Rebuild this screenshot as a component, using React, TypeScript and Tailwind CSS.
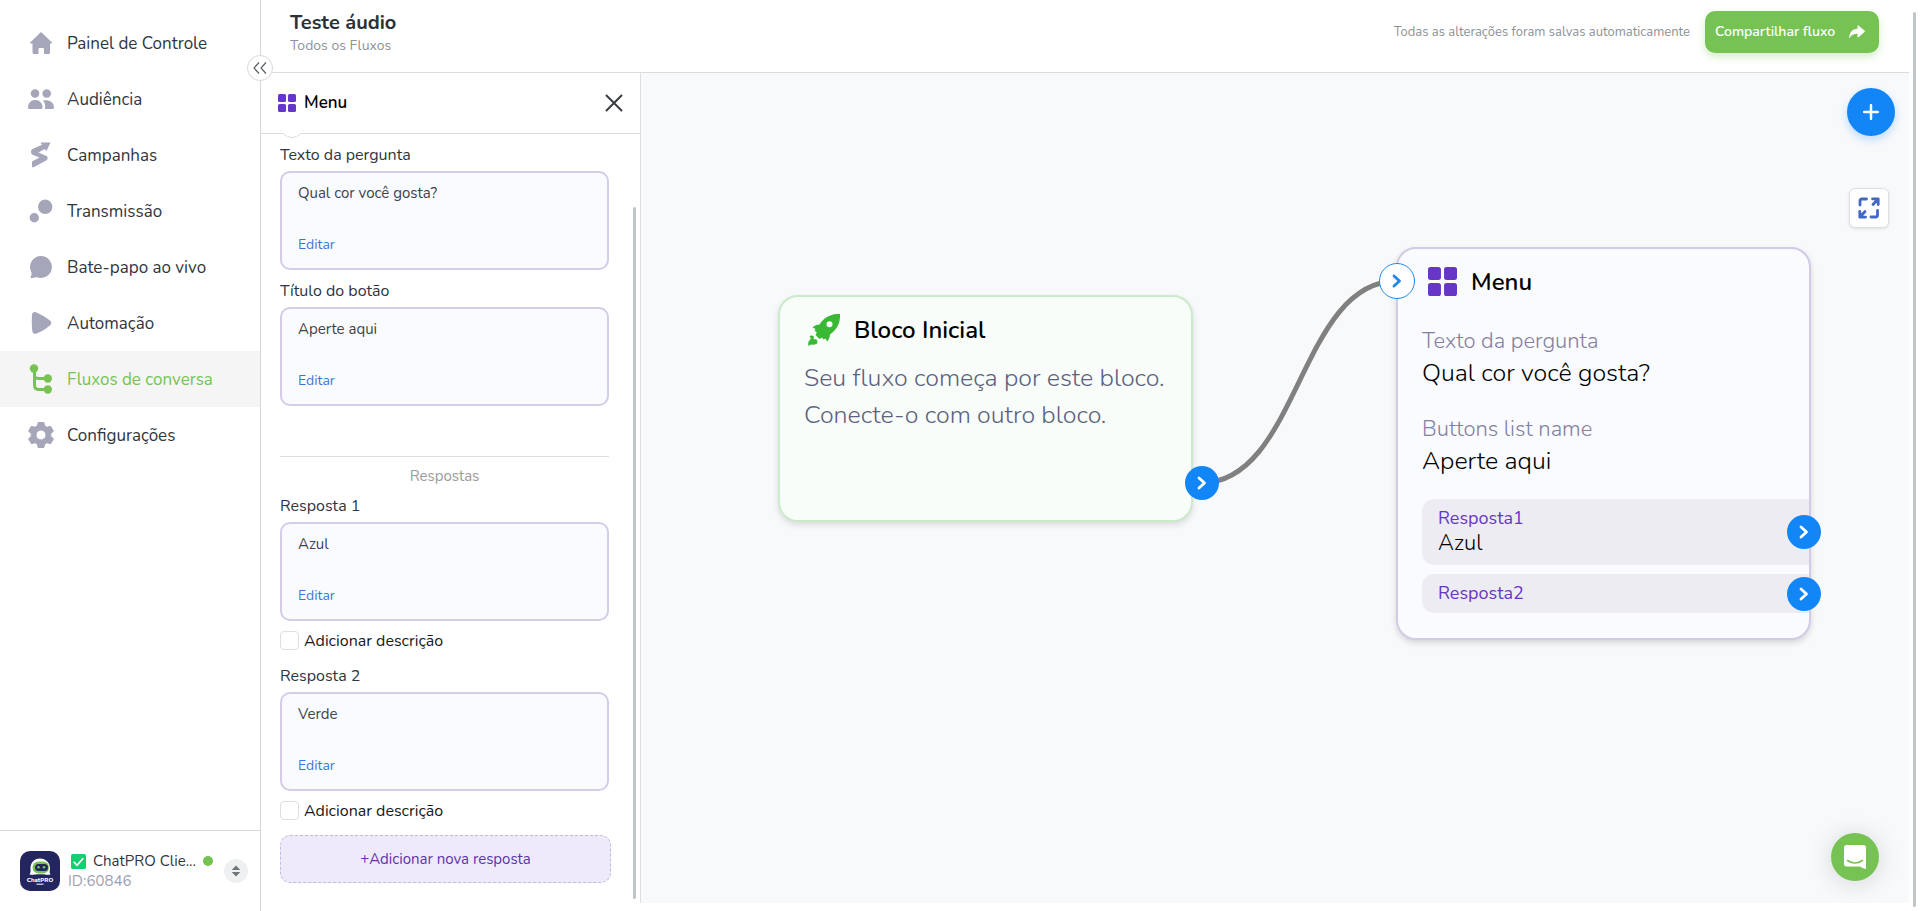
import type { ReactNode } from "react";

type NavItem = { label: string; icon: ReactNode; active?: boolean };

const navItems: NavItem[] = [
  {
    label: "Painel de Controle",
    icon: <path d="M13 2 L24 12.5 Q24.500 13.500 23.500 13.500 H22 V22.500 Q22 24 20.500 24 H16 V19 Q16 18 15 18 H11.500 Q10.500 18 10.500 19 V24 H6 Q4.500 24 4.500 22.500 V13.500 H2.500 Q1.500 13.500 2.200 12.500 Z" />,
  },
  {
    label: "Audiência",
    icon: (
      <>
        <circle cx="7" cy="7.500" r="4.300" />
        <circle cx="18.700" cy="7.500" r="4.300" />
        <path d="M0 21.500 C0 11.500 14.500 11.500 14.500 21.500 Q14.500 23 13 23 H1.500 Q0 23 0 21.500 Z" />
        <path d="M15 14.600 C20 13.500 26 15.500 26 21.500 Q26 23 24.500 23 H17 C17.500 19.500 17 17 15 14.600 Z" />
      </>
    ),
  },
  {
    label: "Campanhas",
    icon: <path d="M12.500 0.500 H22.500 L18.500 9 L16.500 7 L10.500 10.500 L18.500 14 Q20.500 15.500 19 18 L5.500 25.300 Q4 25.800 4 24 V19.500 L11.500 15.500 L4 12.500 Q2 10 4 7.300 L14 2.800 Z" />,
  },
  {
    label: "Transmissão",
    icon: (
      <>
        <circle cx="17.200" cy="8.800" r="7.200" />
        <circle cx="6.300" cy="19.800" r="4.700" />
      </>
    ),
  },
  {
    label: "Bate-papo ao vivo",
    icon: <path d="M13 2 A11 11 0 1 1 8.300 23 Q6 24.300 3 24 Q2 23.700 2.700 22.700 Q4 21 3.500 18.500 A11 11 0 0 1 13 2 Z" />,
  },
  {
    label: "Automação",
    icon: <path d="M4 5 C4 2.500 6 1.500 8.500 2.500 C14 5 19 8 22.500 11 Q24.300 13 22.500 15 C19 18 14 21.500 8.500 23.500 C6 24.500 4.500 23 4.300 21 C3.700 15.500 3.700 10 4 5 Z" />,
  },
  {
    label: "Fluxos de conversa",
    active: true,
    icon: (
      <>
        <path d="M6.500 2 V19 Q6.500 23.500 11 23.500 H19 M6.500 10 Q7 12.500 11 12.500 H19" fill="none" stroke="currentColor" strokeWidth="3" />
        <circle cx="6" cy="2.500" r="4.200" />
        <circle cx="19.800" cy="12.500" r="4.200" />
        <circle cx="19.800" cy="23.500" r="4.200" />
      </>
    ),
  },
  {
    label: "Configurações",
    icon: (
      <path
        fillRule="evenodd"
        strokeWidth="1"
        strokeLinejoin="round"
        stroke="currentColor"
        d="M10.200 0.500 H15.800 L16.700 4 L19 5.300 L22.600 4.300 L25.400 9.100 L22.800 11.700 V14.300 L25.400 16.900 L22.600 21.700 L19 20.700 L16.700 22 L15.800 25.500 H10.200 L9.300 22 L7 20.700 L3.400 21.700 L0.600 16.900 L3.200 14.300 V11.700 L0.600 9.100 L3.400 4.300 L7 5.300 L9.300 4 Z M13 8 A5 5 0 1 0 13 18 A5 5 0 1 0 13 8 Z"
      />
    ),
  },
];

function GridIcon({ className }: { className: string }) {
  return (
    <svg viewBox="0 0 28 28" className={className} fill="#6636c7" aria-hidden="true">
      <rect width="12.500" height="12.500" rx="2.500" />
      <rect x="15.500" width="12.500" height="12.500" rx="2.500" />
      <rect y="15.500" width="12.500" height="12.500" rx="2.500" />
      <rect x="15.500" y="15.500" width="12.500" height="12.500" rx="2.500" />
    </svg>
  );
}

function RocketIcon() {
  return (
    <svg viewBox="0 0 32 32" className="size-8" fill="#3bb836" aria-hidden="true">
      <path
        fillRule="evenodd"
        d="M32 0 C32.500 9 29 15.500 22 20.500 C22 23 21 25.500 19 27.500 L17.500 24.500 L15.500 25.500 L14 23.500 L11.500 25 L7.500 21 L8.800 18.500 L6.500 16.500 L7.500 15 L4.500 13.500 C6.500 11.500 9 10.500 11.500 10.500 C16 3.500 23 -0.500 32 0 Z M21.500 7.200 A3 3 0 1 0 21.500 13.200 A3 3 0 1 0 21.500 7.200 Z"
      />
      <path d="M1.500 22 Q4 21 6 22.500 L5.500 25 L8.500 25.500 Q10.500 28 8.500 30 Q6 31 3 30.500 L0.500 32 Q-0.500 28 1.500 26.500 L2.800 24.500 Z" />
    </svg>
  );
}

function Chevron() {
  return (
    <svg viewBox="0 0 16 16" className="size-4" fill="none" stroke="currentColor" strokeWidth="2.800" strokeLinecap="round" strokeLinejoin="round" aria-hidden="true">
      <path d="M5 3 L10.500 8 L5 13" />
    </svg>
  );
}

function Sidebar() {
  return (
    <aside className="flex w-[261px] shrink-0 flex-col border-r border-[#d5d9db] bg-white">
      <nav className="flex-1 pt-[15px]">
        {navItems.map((item) => (
          <a
            key={item.label}
            href="#"
            className={`flex h-14 items-center gap-[13px] pl-7 text-[17px] ${item.active ? "bg-[#f5f5f5] text-[#76c353]" : "text-[#2f3640]"}`}
          >
            <svg viewBox="0 0 26 26" className={`size-[26px] overflow-visible ${item.active ? "text-[#76c353]" : "text-[#a5a6b9]"}`} fill="currentColor" aria-hidden="true">
              {item.icon}
            </svg>
            <span className="pt-0.5">{item.label}</span>
          </a>
        ))}
      </nav>

      <div className="flex h-[81px] items-center border-t border-[#d5d9db] pl-5 pr-3">
        <svg viewBox="0 0 40 40" className="size-10 shrink-0" role="img" aria-label="ChatPRO">
          <rect width="40" height="40" rx="10" fill="#23255f" />
          <path d="M20 7.500 C26 7.500 30 12 30 17 C30 20 29 21.500 30.500 23.500 C27 24 25 23.500 23 23.200 H17 C15 23.500 13 24 9.500 23.500 C11 21.500 10.500 20 10.500 17 C10.500 12 14 7.500 20 7.500 Z" fill="#fff" />
          <rect x="12.500" y="10.500" width="16.500" height="12" rx="6" fill="#76c353" />
          <rect x="15" y="13" width="13" height="7" rx="3.500" fill="#23255f" />
          <circle cx="18.500" cy="16.300" r="1.300" fill="#76c353" />
          <circle cx="24" cy="16.300" r="1.300" fill="#76c353" />
          <text x="20" y="30.500" textAnchor="middle" fontSize="6" fontWeight="800" fill="#fff">ChatPRO</text>
          <rect x="16.500" y="32.500" width="7" height="1.500" fill="#b9badb" />
        </svg>
        <div className="ml-2 min-w-0 flex-1 text-[15px] leading-5">
          <div className="flex items-center gap-[7px] pl-[3px] text-[#2f3640]">
            <svg viewBox="0 0 16 16" className="size-[15px] shrink-0" aria-hidden="true">
              <rect width="16" height="16" rx="2" fill="#14cf72" />
              <path d="M3 8.500 L6.500 12 L13 4.500" fill="none" stroke="#fff" strokeWidth="1.800" />
            </svg>
            <span className="whitespace-nowrap">ChatPRO Clie...</span>
            <span className="size-[10px] shrink-0 rounded-full bg-[#76c353]" />
          </div>
          <div className="text-[#9fa1b4]">ID:60846</div>
        </div>
        <button type="button" aria-label="Trocar conta" className="flex size-6 shrink-0 items-center justify-center rounded-full bg-[#eef0f1]">
          <svg viewBox="0 0 10 12" className="h-3 w-[10px]" fill="#70777b" aria-hidden="true">
            <path d="M5 0.500 L9.300 5 H0.700 Z M5 11.500 L9.300 7 H0.700 Z" />
          </svg>
        </button>
      </div>
    </aside>
  );
}

function Field({ id, label, value }: { id: string; label: string; value: string }) {
  return (
    <div>
      <label htmlFor={id} className="mb-1 block text-base leading-6 text-[#2f3640]">{label}</label>
      <div className="flex flex-col items-start rounded-[10px] border-2 border-[#d3cdea] bg-[#fafbff] px-4 pt-[10px] pb-3">
        <textarea id={id} defaultValue={value} className="block h-[51px] w-full resize-none overflow-hidden bg-transparent text-[15px] leading-5 text-[#3f434a] outline-none" />
        <button type="button" className="text-sm leading-[22px] text-[#3a78d8]">Editar</button>
      </div>
    </div>
  );
}

function DescriptionCheck({ id }: { id: string }) {
  return (
    <div className="mt-[10px] flex h-[19px] items-center gap-[5px]">
      <input id={id} type="checkbox" className="size-[19px] appearance-none rounded border border-[#dcdfe1] bg-white checked:bg-[#6636c7]" />
      <label htmlFor={id} className="text-base leading-5 text-[#17191c]">Adicionar descrição</label>
    </div>
  );
}

function EditorPanel() {
  return (
    <section className="flex w-[380px] shrink-0 flex-col border-r border-[#dcdfe1] bg-white">
      <div className="flex h-[61px] shrink-0 items-center border-b border-[#d9dcde] pl-[17px] pr-[17px]">
        <GridIcon className="size-[18px]" />
        <h2 className="ml-2 flex-1 text-[17px] font-semibold text-black">Menu</h2>
        <button type="button" aria-label="Fechar">
          <svg viewBox="0 0 18 18" className="size-[18px]" stroke="#3a3d41" strokeWidth="2" strokeLinecap="round" aria-hidden="true">
            <path d="M1.500 1.500 L16.500 16.500 M16.500 1.500 L1.500 16.500" />
          </svg>
        </button>
      </div>

      {/* the scroll area overlaps the title's border by one pixel */}
      <div className="-mt-px flex min-h-0 flex-1">
        <div className="min-w-0 flex-1 overflow-hidden pl-[19px] pr-[22px]">
          {/* tail of the avatar that is scrolled away under the title */}
          <div className="-mt-[19px] size-6 rounded-full border border-[#d9dcde] bg-white" />
          <div className="mt-[5px] flex flex-col gap-[9px] pr-0.5">
            <Field id="question" label="Texto da pergunta" value="Qual cor você gosta?" />
            <Field id="button-title" label="Título do botão" value="Aperte aqui" />
          </div>
          <h3 className="mt-[50px] mr-0.5 mb-2 border-t border-[#dcdfe1] pt-[9px] text-center text-[15px] leading-5 text-[#999ca0]">Respostas</h3>
          <div className="flex flex-col gap-[14px] pr-0.5">
            <div>
              <Field id="answer-1" label="Resposta 1" value="Azul" />
              <DescriptionCheck id="description-1" />
            </div>
            <div>
              <Field id="answer-2" label="Resposta 2" value="Verde" />
              <DescriptionCheck id="description-2" />
            </div>
          </div>
          <button type="button" className="mt-[15px] h-12 w-full rounded-[10px] border border-dashed border-[#c3b8de] bg-[#efeaf9] text-[15px] text-[#5a35b0]">
            +Adicionar nova resposta
          </button>
        </div>
        <div className="flex w-[7px] pt-[74px] pb-1">
          <div className="w-[3px] rounded-full bg-[#bfc5c9]" />
        </div>
      </div>
    </section>
  );
}

function Answer({ label, value }: { label: string; value?: string }) {
  return (
    <div className="relative rounded-l-[12px] bg-[#eeecf3] pt-[7px] pb-2 pl-4">
      <p className="text-lg leading-6 text-[#6636c7]">{label}</p>
      {value ? <p className="text-[22px] leading-[27px] font-light text-black">{value}</p> : null}
      <button type="button" aria-label={`Conectar ${label}`} className="absolute top-1/2 -right-3 flex size-[34px] -translate-y-1/2 items-center justify-center rounded-full bg-[#1286f7] text-white">
        <Chevron />
      </button>
    </div>
  );
}

function Canvas() {
  return (
    <section className="relative min-w-0 flex-1 overflow-hidden bg-[#f8f9fb]">
      <svg className="absolute inset-0 size-full" aria-hidden="true">
        <path d="M560 410 C658 410 658 208 756 208" fill="none" stroke="#808080" strokeWidth="5" />
      </svg>

      <article className="absolute top-[222px] left-[137px] h-[227px] w-[415px] rounded-[20px] border-2 border-[#cbeaca] bg-[#f9fdfa] pt-[17px] pl-6 shadow-[0_3px_6px_rgba(0,0,0,0.12)]">
        <div className="flex h-8 items-center gap-[14px] pl-1">
          <RocketIcon />
          <h2 className="text-2xl font-semibold text-black">Bloco Inicial</h2>
        </div>
        <p className="mt-[14px] text-[25px] leading-[37px] font-light text-[#5d6280]">
          Seu fluxo começa por este bloco.
          <br />
          Conecte-o com outro bloco.
        </p>
        <button type="button" aria-label="Próximo bloco" className="absolute top-[169px] -right-7 flex size-[34px] items-center justify-center rounded-full bg-[#1286f7] text-white">
          <Chevron />
        </button>
      </article>

      <article className="absolute top-[174px] left-[755px] w-[415px] rounded-[20px] border-2 border-[#d1cbe8] bg-[#fafbff] pt-[18px] pb-[25px] pl-6 shadow-[0_3px_6px_rgba(0,0,0,0.14)]">
        <div className="mb-[29px] flex h-[29px] items-center gap-[14px] pl-[6px]">
          <GridIcon className="size-[29px]" />
          <h2 className="text-2xl leading-7 font-semibold text-black">Menu</h2>
        </div>
        <dl className="leading-8 font-light">
          <dt className="text-[22px] text-[#8480a0]">Texto da pergunta</dt>
          <dd className="mb-6 text-[25px] text-black">Qual cor você gosta?</dd>
          <dt className="text-[22px] text-[#8480a0]">Buttons list name</dt>
          <dd className="text-[25px] text-black">Aperte aqui</dd>
        </dl>
        <div className="mt-[22px] flex flex-col gap-[9px]">
          <Answer label="Resposta1" value="Azul" />
          <Answer label="Resposta2" />
        </div>
        <button type="button" aria-label="Entrada do bloco" className="absolute top-[14px] -left-[19px] flex size-9 items-center justify-center rounded-full border border-[#1f87ea] bg-white text-[#1f87ea]">
          <Chevron />
        </button>
      </article>

      <button type="button" aria-label="Adicionar bloco" className="absolute top-[15px] right-[14px] flex size-12 items-center justify-center rounded-full bg-[#1286f7] shadow-[0_4px_8px_rgba(18,134,247,0.25)]">
        <svg viewBox="0 0 16 16" className="size-4" stroke="#fff" strokeWidth="2.500" strokeLinecap="round" aria-hidden="true">
          <path d="M8 1.200 V14.800 M1.200 8 H14.800" />
        </svg>
      </button>
      <button type="button" aria-label="Tela cheia" className="absolute top-[115px] right-5 flex size-10 items-center justify-center rounded-md border border-[#dcdfe3] bg-white shadow-[0_1px_3px_rgba(0,0,0,0.1)]">
        <svg viewBox="0 0 22 22" className="size-[22px]" fill="none" stroke="#4068c4" strokeWidth="2.800" strokeLinecap="round" strokeLinejoin="round" aria-hidden="true">
          <path d="M2 8 V4 Q2 2 4 2 H8.500" />
          <path d="M14.500 1.800 H20.200 V7.500 M20 2 L15 7.500" />
          <path d="M19.500 13.500 V18 Q19.500 20 17.500 20 H13" />
          <path d="M1.800 14.500 V20.200 H7.500 M2 20 L7 14.500" />
        </svg>
      </button>
      <button type="button" aria-label="Abrir chat" className="absolute right-[30px] bottom-[22px] flex size-12 items-center justify-center rounded-full bg-[#76c353] shadow-[0_2px_24px_rgba(0,0,0,0.15)]">
        <svg viewBox="0 0 22 24" className="h-6 w-[22px]" aria-hidden="true">
          <path d="M2.500 0 H19.500 Q22 0 22 2.500 V24 C19.500 23.500 17.500 22.500 16 21.500 H2.500 Q0 21.500 0 19 V2.500 Q0 0 2.500 0 Z" fill="#fff" />
          <path d="M3.500 15.500 Q11 20.500 18.500 15.500" fill="none" stroke="#76c353" strokeWidth="1.600" strokeLinecap="round" />
        </svg>
      </button>
    </section>
  );
}

export default function App() {
  return (
    <div className="flex h-screen overflow-hidden bg-white font-['Nunito','Lato',sans-serif]">
      <Sidebar />

      <main className="relative flex min-w-0 flex-1 flex-col pb-2">
        <header className="flex h-[73px] shrink-0 items-start border-b border-[#d9dcde] pt-[11px] pr-[30px] pl-[29px]">
          <div className="flex-1">
            <h1 className="text-xl leading-6 font-bold text-[#2b3238]">Teste áudio</h1>
            <a href="#" className="block text-sm leading-[22px] text-[#8d9296]">Todos os Fluxos</a>
          </div>
          <p className="mr-[15px] text-[13px] leading-[42px] text-[#8d9296]">Todas as alterações foram salvas automaticamente</p>
          <button type="button" className="flex h-[42px] w-[174px] items-center justify-between rounded-[10px] bg-[#76c353] pr-[14px] pl-[10px] text-sm font-semibold text-white shadow-[0_4px_8px_rgba(118,195,83,0.3)]">
            Compartilhar fluxo
            <svg viewBox="0 0 16 14" className="h-[14px] w-4" fill="currentColor" aria-hidden="true">
              <path d="M0 13.500 C0.500 6.500 4 4 8.500 3.800 V0.800 Q8.700 0 9.500 0.500 L15.700 5.800 Q16.200 6.300 15.700 6.800 L9.500 12.200 Q8.700 12.600 8.500 11.800 V8.800 C5 8.800 2 10 0 13.500 Z" />
            </svg>
          </button>
        </header>

        <div className="flex min-h-0 flex-1">
          <EditorPanel />
          <Canvas />
        </div>

        <button type="button" aria-label="Recolher menu" className="absolute top-[55px] -left-[14px] flex size-[26px] items-center justify-center rounded-full border border-[#d5d9db] bg-white">
          <svg viewBox="0 0 14 12" className="h-3 w-[14px]" fill="none" stroke="#5b6064" strokeWidth="1.200" aria-hidden="true">
            <path d="M6 0.500 L1 6 L6 11.500 M13 0.500 L8 6 L13 11.500" />
          </svg>
        </button>
      </main>

      <div className="flex w-[11px] shrink-0 pt-3 pb-1 pl-1">
        <div className="w-[3px] rounded-full bg-[#bfc5c9]" />
      </div>
    </div>
  );
}
